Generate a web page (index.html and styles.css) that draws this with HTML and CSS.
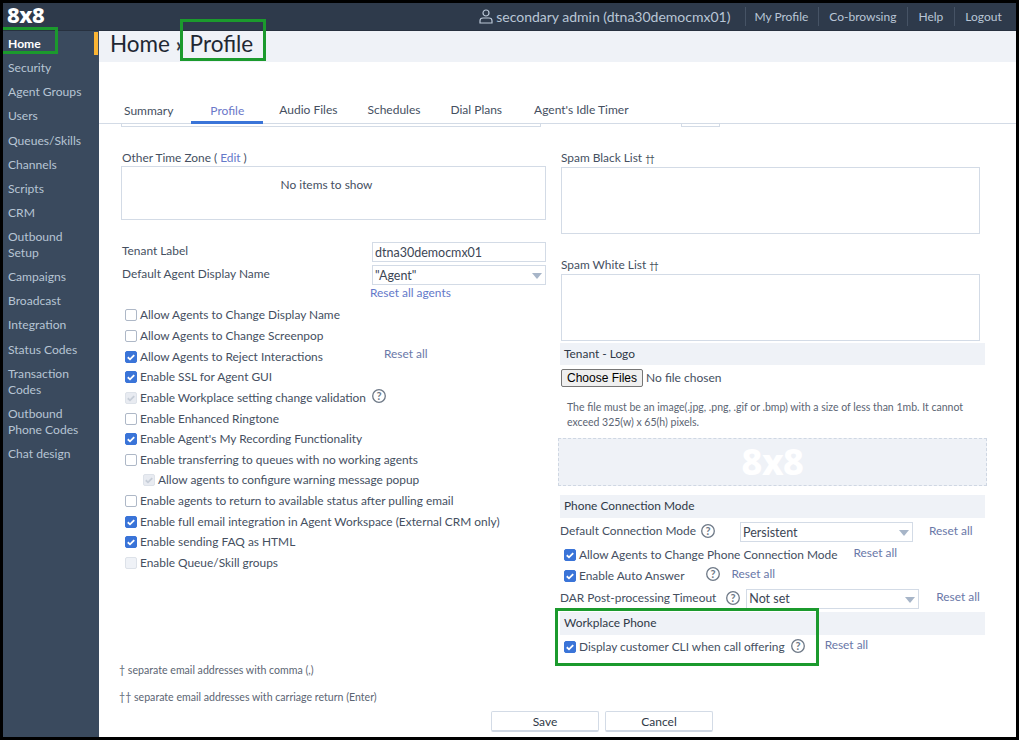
FILE: index.html
```html
<!DOCTYPE html>
<html lang="en">
<head>
<meta charset="utf-8">
<title>Profile</title>
<link rel="stylesheet" href="styles.css">
</head>
<body>
<svg class="defs" width="0" height="0" aria-hidden="true">
  <symbol id="tick" viewBox="0 0 13 13"><path d="M3 6.8 5.4 9 10 4.4" fill="none" stroke="currentColor" stroke-width="2"/></symbol>
</svg>
<div class="app">
  <header class="topbar">
    <span class="logo">8x8</span>
    <svg class="user-icon" width="14" height="15" viewBox="0 0 14 15"><circle cx="7" cy="4" r="3" fill="none" stroke="#b9c6d6" stroke-width="1.2"/><path d="M1 14v-2.2C1 10 2.4 9 4 9h6c1.600 0 3 1 3 2.800V14z" fill="none" stroke="#b9c6d6" stroke-width="1.2"/></svg>
    <span class="who">secondary admin (dtna30democmx01)</span>
    <nav class="toplinks"><a>My Profile</a><a>Co-browsing</a><a>Help</a><a>Logout</a></nav>
  </header>
  <div class="body">
    <nav class="side">
      <a class="on">Home</a><a>Security</a><a>Agent Groups</a><a>Users</a><a>Queues/Skills</a><a>Channels</a><a>Scripts</a><a>CRM</a><a>Outbound<br>Setup</a><a>Campaigns</a><a>Broadcast</a><a>Integration</a><a>Status Codes</a><a>Transaction<br>Codes</a><a>Outbound<br>Phone Codes</a><a>Chat design</a>
    </nav>
    <main class="main">
      <div class="title"><span class="marker"></span><h1>Home <small>›</small> Profile</h1></div>
      <div class="tabs"><a>Summary</a><a class="on">Profile</a><a>Audio Files</a><a>Schedules</a><a>Dial Plans</a><a>Agent's Idle Timer</a></div>
      <div class="cols">
        <section class="left">
          <div class="clip clip-l"></div>
          <div class="label tz">Other Time Zone ( <a class="link">Edit</a> )</div>
          <div class="listbox">No items to show</div>
          <div class="frow tenant"><span class="flabel">Tenant Label</span><span class="field">dtna30democmx01</span></div>
          <div class="frow agent"><span class="flabel">Default Agent Display Name</span><span class="field sel">"Agent"</span></div>
          <div class="reset-agents"><a class="link">Reset all agents</a></div>
          <ul class="checks">
            <li><i class="cb"></i>Allow Agents to Change Display Name</li>
            <li><i class="cb"></i>Allow Agents to Change Screenpop</li>
            <li><i class="cb ok"><svg><use href="#tick"/></svg></i><span class="wide">Allow Agents to Reject Interactions</span><a class="reset">Reset all</a></li>
            <li><i class="cb ok"><svg><use href="#tick"/></svg></i>Enable SSL for Agent GUI</li>
            <li><i class="cb dis"><svg><use href="#tick"/></svg></i>Enable Workplace setting change validation<svg class="help h-wp" width="14" height="14" viewBox="0 0 14 14"><circle cx="7" cy="7" r="6.300"/><text x="7" y="10.800">?</text></svg></li>
            <li><i class="cb"></i>Enable Enhanced Ringtone</li>
            <li><i class="cb ok"><svg><use href="#tick"/></svg></i>Enable Agent's My Recording Functionality</li>
            <li><i class="cb"></i>Enable transferring to queues with no working agents</li>
            <li class="sub"><i class="cb dis"><svg><use href="#tick"/></svg></i>Allow agents to configure warning message popup</li>
            <li><i class="cb"></i>Enable agents to return to available status after pulling email</li>
            <li><i class="cb ok"><svg><use href="#tick"/></svg></i>Enable full email integration in Agent Workspace (External CRM only)</li>
            <li><i class="cb ok"><svg><use href="#tick"/></svg></i>Enable sending FAQ as HTML</li>
            <li><i class="cb off"></i>Enable Queue/Skill groups</li>
          </ul>
          <p class="foot f1">† separate email addresses with comma (,)</p>
          <p class="foot f2">†† separate email addresses with carriage return (Enter)</p>
        </section>
        <section class="right">
          <div class="clip clip-r"></div>
          <div class="label inset spam1">Spam Black List <span class="dag">††</span></div>
          <div class="spam"></div>
          <div class="label inset spam2">Spam White List <span class="dag">††</span></div>
          <div class="spam"></div>
          <div class="band b-logo">Tenant - Logo</div>
          <input class="file" type="file" multiple>
          <p class="note">The file must be an image(.jpg, .png, .gif or .bmp) with a size of less than 1mb. It cannot exceed 325(w) x 65(h) pixels.</p>
          <div class="preview"><span class="logo big">8x8</span></div>
          <div class="band b-phone">Phone Connection Mode</div>
          <div class="row r-mode"><span class="w-mode">Default Connection Mode</span><svg class="help" width="14" height="14" viewBox="0 0 14 14"><circle cx="7" cy="7" r="6.300"/><text x="7" y="10.800">?</text></svg><span class="field sel s-mode">Persistent</span><a class="reset">Reset all</a></div>
          <div class="row r-allow"><i class="cb ok"><svg><use href="#tick"/></svg></i><span>Allow Agents to Change Phone Connection Mode</span><a class="reset up">Reset all</a></div>
          <div class="row r-auto"><i class="cb ok"><svg><use href="#tick"/></svg></i><span>Enable Auto Answer</span><svg class="help" width="14" height="14" viewBox="0 0 14 14"><circle cx="7" cy="7" r="6.300"/><text x="7" y="10.800">?</text></svg><a class="reset up">Reset all</a></div>
          <div class="row r-dar"><span class="t-dar">DAR Post-processing Timeout</span><svg class="help" width="14" height="14" viewBox="0 0 14 14"><circle cx="7" cy="7" r="6.300"/><text x="7" y="10.800">?</text></svg><span class="field sel s-dar">Not set</span><a class="reset up">Reset all</a></div>
          <div class="band b-wp">Workplace Phone</div>
          <div class="row r-cli"><i class="cb ok"><svg><use href="#tick"/></svg></i><span>Display customer CLI when call offering</span><svg class="help" width="14" height="14" viewBox="0 0 14 14"><circle cx="7" cy="7" r="6.300"/><text x="7" y="10.800">?</text></svg><a class="reset up">Reset all</a></div>
        </section>
      </div>
      <div class="actions"><button type="button">Save</button><button type="button">Cancel</button></div>
    </main>
  </div>
  <span class="mark m-home"></span>
  <span class="mark m-profile"></span>
  <span class="mark m-wp"></span>
</div>
</body>
</html>
```
FILE: styles.css
```css
* { box-sizing: border-box; }
html, body { margin: 0; padding: 0; background: #000; }
body { width: 1019px; height: 740px; overflow: hidden; font: 11.900px/16px "Lato", "Noto Sans", sans-serif; color: #454f5f; }
.defs { position: absolute; }
a { color: inherit; text-decoration: none; }
.app { position: relative; width: 1019px; height: 740px; border: 3px solid #000; background: #fff; overflow: hidden; display: flex; flex-direction: column; }
.app .mark { position: absolute; border: 3px solid #1b9a2d; }
.m-home { left: -3px; top: 24px; width: 58px; height: 27px; }
.m-profile { left: 177px; top: 16px; width: 86px; height: 42px; }
.m-wp { left: 552px; top: 605px; width: 264px; height: 58px; }

.topbar { height: 28px; flex: none; background: #2e3a4b; border-bottom: 1px solid #27313f; display: flex; align-items: center; color: #b9c6d6; }
.logo { font: 800 22px/1 "Noto Sans", sans-serif; color: #fff; letter-spacing: -.5px; }
.topbar .logo { margin: 0 0 5px 4px; }
.user-icon { margin-left: 435px; margin-bottom: 1px; }
.who { margin-left: 3px; font-size: 14px; white-space: nowrap; }
.toplinks { margin-left: 15px; display: flex; font-size: 12px; }
.toplinks a { border-left: 1px solid #465365; padding: 0 11px 0 10px; height: 19px; line-height: 19px; white-space: nowrap; }
.toplinks a:first-child { padding: 0 10px 0 8px; }

.body { flex: 1; display: flex; min-height: 0; }
.side { width: 96px; flex: none; background: #3a4a5e; padding-top: 1px; color: #b7c5d4; }
.side a { display: block; padding: 4.070px 5px; font-size: 12.100px; }
.side .on { color: #fff; font-weight: 700; }

.main { flex: 1; min-width: 0; }
.title { height: 31px; background: #eff2f7; display: flex; }
.marker { width: 4px; height: 23px; margin: 1px 0 0 -5px; background: #fbb534; }
.main .title h1 { margin: 0 0 0 12px; font: 400 22.500px/25px "Lato", "Noto Sans", sans-serif; color: #1f2833; white-space: nowrap; }
.title small { font-size: 21px; font-weight: 700; color: #2f3947; margin-right: 2px; }
.tabs { display: flex; height: 22px; margin-top: 40px; padding-left: 10px; border-bottom: 1px solid #d3dbe6; color: #454f5f; font-size: 12px; }
.tabs a { padding: 0 15px; white-space: nowrap; }
.tabs a:first-child { margin-top: 1px; }
.tabs .on { margin: 1px 1px 0 3px; padding: 0 19px; height: 21px; color: #6b78c9; border-bottom: 3px solid #3a74d8; }
.tabs a:last-child { margin-left: 2px; }

.cols { display: flex; padding-left: 22px; column-gap: 12px; }
.left { width: 425px; flex: none; }
.right { width: 429px; flex: none; }
.clip { height: 3px; border: 1px solid #d3dbe6; border-top: 0; }
.clip-l { width: 420px; }
.clip-r { width: 39px; margin-left: 123px; }
.label { height: 16px; white-space: nowrap; }
.tz { margin-top: 23px; padding-left: 1px; }
.link { color: #6479c9; }
.listbox { height: 54px; border: 1px solid #d3dbe6; padding: 10px 14px 0 0; text-align: center; }
.frow { display: flex; align-items: center; height: 20px; }
.tenant { margin-top: 22px; }
.agent { margin-top: 3px; }
.flabel { width: 250px; flex: none; margin-left: 1px; padding-bottom: 3px; }
.field { display: block; height: 20px; border: 1px solid #d3dbe6; padding-left: 2px; line-height: 19px; font-size: 12.500px; color: #3c4655; position: relative; }
.frow .field { width: 174px; }
.sel::after { content: ""; position: absolute; right: 3px; top: 7px; border: 5px solid transparent; border-top: 6px solid #a7b5c8; border-bottom: 0; }
.reset-agents { height: 16px; padding-left: 249px; }
.checks { list-style: none; margin: 3.900px 0 0; padding: 0 0 0 4px; }
.checks li { display: flex; align-items: center; height: 20.660px; white-space: nowrap; }
.checks .sub { padding-left: 18px; }
.cb { width: 12px; height: 12px; flex: none; display: block; margin-right: 3px; border: 1px solid #aeb8c7; border-radius: 2px; background: #fff; }
.cb svg { display: block; width: 12px; height: 12px; margin: -1px; overflow: visible; }
.cb.ok { background: #3a74d8; border-color: #3a74d8; color: #fff; }
.cb.dis { background: #e8ebf1; border-color: #dde2e9; color: #c6cdd7; }
.cb.off { background: #eff2f7; border-color: #dde2e9; }
.wide { width: 244px; }
.reset { color: #6a78a8; white-space: nowrap; }
.checks .reset { margin-bottom: 5px; }
.help { flex: none; fill: none; stroke: #6e7987; stroke-width: 1.300; }
.help text { font: 700 11px "Lato", sans-serif; text-anchor: middle; fill: #6e7987; stroke: none; }
.h-wp { margin: 0 0 4px 6px; }
.foot { margin: 0 0 0 -2px; height: 14px; line-height: 14px; font-size: 10.600px; color: #5b6573; white-space: nowrap; }
.f1 { margin-top: 90px; }
.f2 { margin-top: 13px; }

.inset { margin-left: 3px; }
.dag { font-size: 9px; letter-spacing: -1px; color: #2f3947; }
.spam1 { margin-top: 23px; }
.spam2 { margin-top: 23px; }
.spam { margin: 1px 0 0 3px; width: 419px; height: 67px; border: 1px solid #d3dbe6; }
.band { margin-left: 2px; width: 425px; background: #eff2f7; padding-left: 4px; color: #2f3947; white-space: nowrap; display: flex; align-items: center; }
.b-logo { margin-top: 2px; height: 22px; }
.file { display: block; margin: 4px 0 0 3px; height: 18px; font: 12px "Lato", sans-serif; color: #454f5f; }
.file::file-selector-button { font: 12px "Liberation Sans", sans-serif; height: 18px; margin-right: 3px; padding: 0 5px; background: #efefef; border: 1px solid #767676; border-radius: 2px; color: #000; }
.note { margin: 13px 0 0 9px; width: 410px; font-size: 10.500px; line-height: 15px; color: #5b6573; }
.preview { margin-top: 8px; height: 48px; border: 1px dashed #cfd7e3; background: #eff2f7; display: flex; align-items: center; justify-content: center; }
.logo.big { font-size: 36px; margin-bottom: 0; }
.b-phone { margin-top: 9px; height: 23px; padding-bottom: 1px; }
.row { display: flex; align-items: center; margin-left: 2px; white-space: nowrap; height: 20px; }
.r-mode { margin-top: 4px; }
.w-mode { width: 141px; flex: none; padding-bottom: 2px; }
.r-mode .help { margin-bottom: 2px; }
.s-mode { width: 173px; margin-left: 25px; }
.r-mode .reset { margin-left: 16px; margin-bottom: 2px; }
.r-allow { margin-top: 3px; padding-left: 4px; }
.r-allow .reset { margin-left: 16px; }
.up { margin-bottom: 4px; }
.r-auto { margin-top: 1px; padding-left: 4px; }
.r-auto .help { margin: 0 0 5px 22px; }
.r-auto .reset { margin-left: 11px; }
.r-dar { margin-top: 3px; }
.t-dar { padding-bottom: 2px; }
.r-dar .help { margin-left: 10px; margin-bottom: 2px; }
.s-dar { width: 173px; margin-left: 6px; line-height: 18px; }
.r-dar .reset { margin-left: 17px; margin-bottom: 4px; }
.b-wp { margin-top: 3px; height: 23px; padding-bottom: 1px; }
.r-cli { margin-top: 2px; padding-left: 4px; }
.r-cli .help { margin: 0 0 2px 6px; }
.r-cli .reset { margin-left: 20px; }

.actions { display: flex; gap: 6px; padding-left: 392px; margin-top: 7px; }
.actions button { width: 108px; height: 21px; padding: 1px 0 0; font: 12px "Lato", sans-serif; color: #2f3947; background: #fff; border: 1px solid #d3dbe6; border-bottom: 2px solid #cfd7e3; border-radius: 2px; }
```
